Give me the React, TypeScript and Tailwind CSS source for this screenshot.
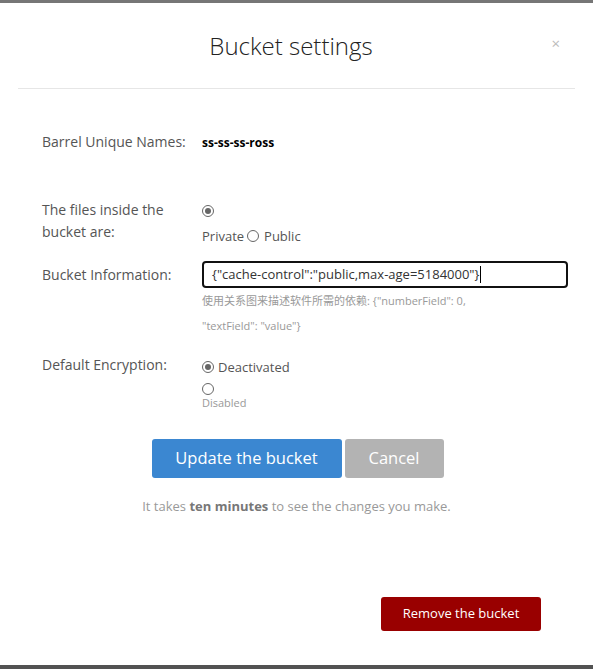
import React from "react";

function Radio({ checked }: { checked?: boolean }) {
  return (
    <span className="inline-flex h-[12px] w-[12px] items-center justify-center rounded-full border border-[#666] bg-white align-middle">
      {checked && <span className="h-[6px] w-[6px] rounded-full bg-[#666]" />}
    </span>
  );
}

export default function App() {
  return (
    <div className="flex h-[669px] w-[593px] flex-col font-['Open_Sans',sans-serif]">
      <div className="h-[3px] bg-[#767676]" />
      <div className="flex h-[662px] flex-col bg-white">
        <div className="relative flex h-[85px] items-center justify-center pr-[11px]">
          <h1 className="text-[24px] font-light leading-none text-[#222] mt-[1px]">Bucket settings</h1>
          <span className="absolute right-[33px] top-[33px] text-[15px] leading-none text-[#bbb]">×</span>
        </div>
        <div className="mx-[18px] h-px bg-[#e6e6e6]" />

        <div className="pl-[42px] pr-[25px] text-[14px] text-[#555]">
          <div className="mt-[41px] flex items-center leading-[20px]">
            <div className="w-[160px]">Barrel Unique Names:</div>
            <div className="text-[12px] font-bold text-black mt-[3px]">ss-ss-ss-ross</div>
          </div>

          <div className="mt-[46px] flex leading-[22px]">
            <div className="w-[160px]">The files inside the<br />bucket are:</div>
            <div className="flex flex-col pt-[5px] text-[13px]">
              <div className="h-[13px] flex items-center"><Radio checked /></div>
              <div className="mt-[9px] flex items-center leading-[20px]">
                <span>Private</span>
                <span className="ml-[3px] mr-[5px] flex"><Radio /></span>
                <span>Public</span>
              </div>
            </div>
          </div>

          <div className="mt-[15px] flex items-center">
            <div className="w-[160px]">Bucket Information:</div>
            <div className="flex-1 h-[27px] rounded-[4px] border-2 border-[#111] px-[8px] flex items-center text-[#333] text-[13px]">
              {'{"cache-control":"public,max-age=5184000"}'}<span className="ml-px h-[17px] w-px bg-black" />
            </div>
          </div>
          <div className="ml-[160px] mt-0 text-[11px] leading-[25px] text-[#999] font-['Open_Sans','Noto_Sans_CJK_SC',sans-serif]">
            使用关系图来描述软件所需的依赖: {'{"numberField": 0,'}<br />{'"textField": "value"}'}
          </div>

          <div className="mt-[17px] flex">
            <div className="w-[160px] leading-[20px]">Default Encryption:</div>
            <div className="flex flex-col text-[13px]">
              <div className="flex items-center leading-[20px] mt-[2px]">
                <Radio checked />
                <span className="ml-[4px]">Deactivated</span>
              </div>
              <div className="mt-[6px] flex"><Radio /></div>
              <div className="text-[11px] leading-[15px] text-[#999]">Disabled</div>
            </div>
          </div>
        </div>

        <div className="mt-[29px] flex justify-center gap-[3px] pl-[2px]">
          <button className="h-[39px] w-[190px] rounded-[3px] bg-[#3b87d1] text-[16.5px] text-white">Update the bucket</button>
          <button className="h-[39px] w-[99px] rounded-[3px] bg-[#b3b3b3] text-[16.5px] text-white">Cancel</button>
        </div>
        <p className="mt-[19px] text-center text-[13px] text-[#999]">
          It takes <b className="text-[#777]">ten minutes</b> to see the changes you make.
        </p>

        <div className="mt-[80px] flex justify-end pr-[52px]">
          <button className="h-[34px] w-[160px] rounded-[3px] bg-[#990000] text-[13px] text-white">Remove the bucket</button>
        </div>
      </div>
      <div className="h-[4px] bg-[#525252]" />
    </div>
  );
}
